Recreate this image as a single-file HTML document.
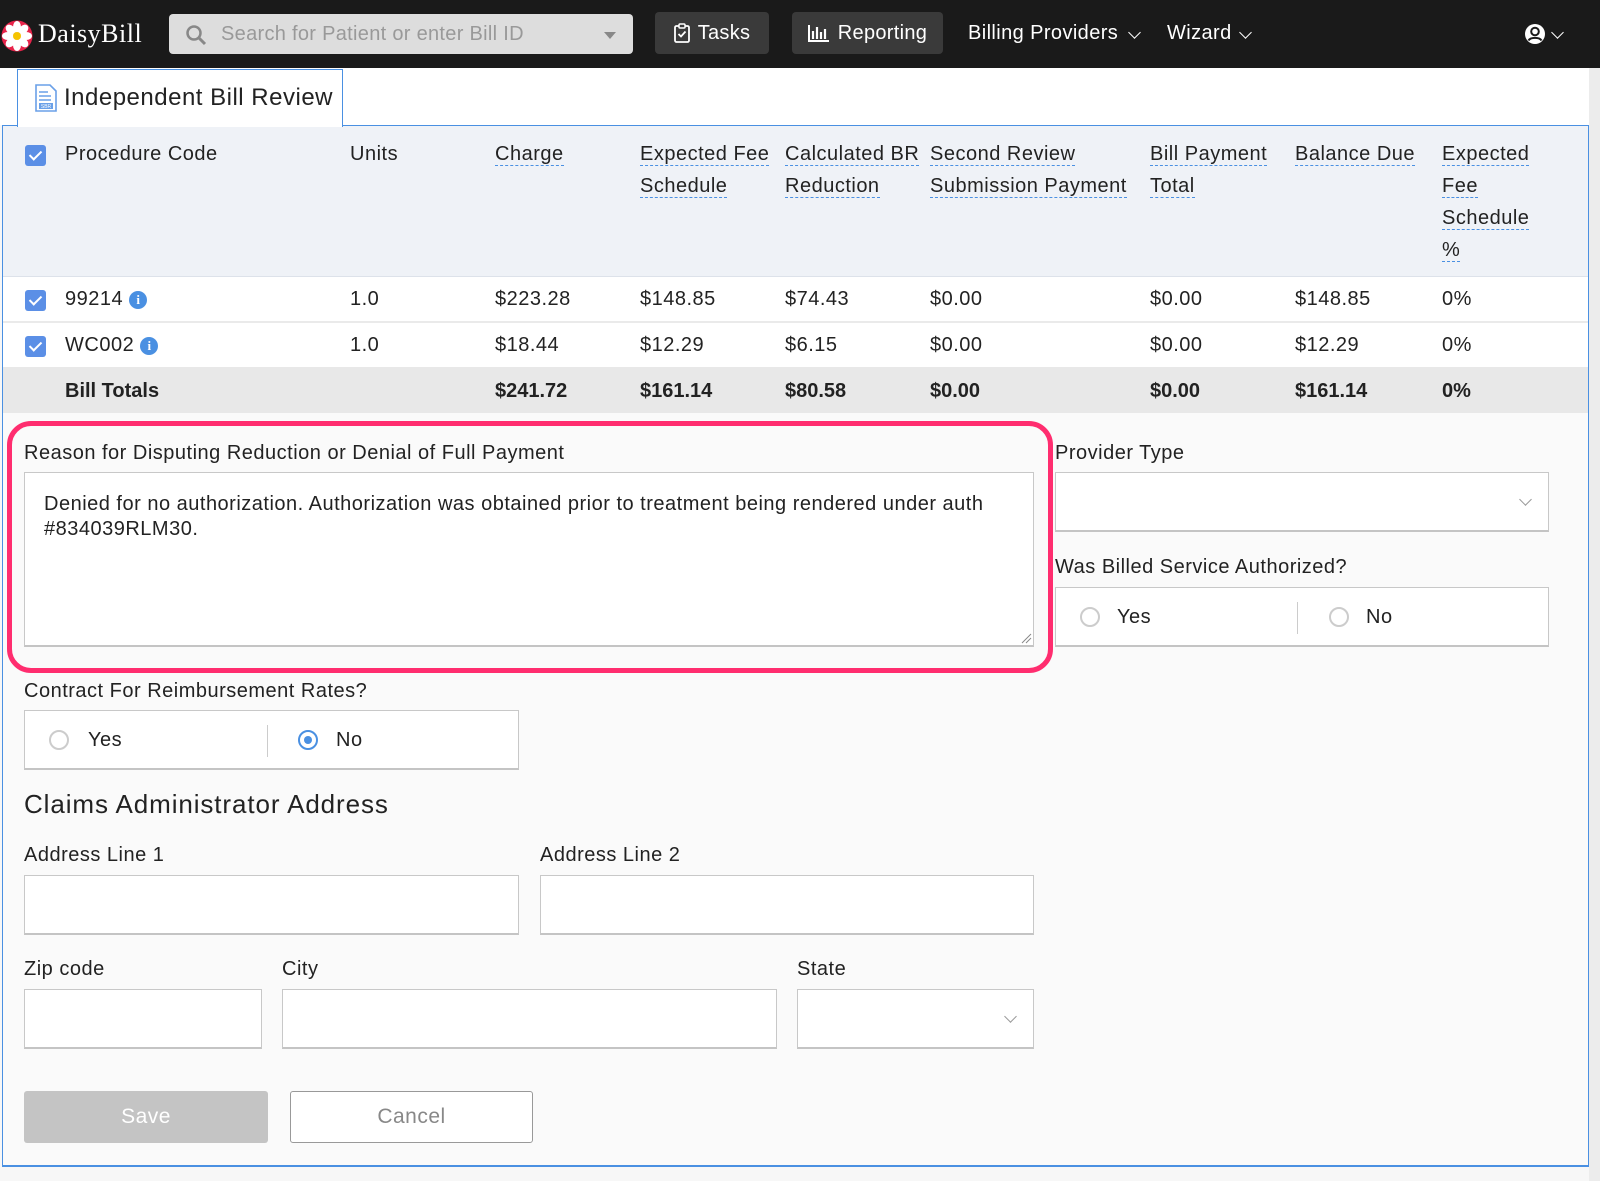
<!DOCTYPE html>
<html><head><meta charset="utf-8">
<style>
*{box-sizing:border-box;margin:0;padding:0}
body{width:1600px;height:1181px;position:relative;background:#f7f7f7;font-family:"Liberation Sans",Arial,sans-serif;color:#222;overflow:hidden}
.a{position:absolute}
.nav{left:0;top:0;width:1600px;height:68px;background:#1a1a1a}
.btn{background:#3a3a3a;border-radius:4px;color:#fff;font-size:20px;display:flex;align-items:center;justify-content:center;gap:8px;letter-spacing:.3px}
.navt{color:#fff;font-size:20px;letter-spacing:.4px}
.panel{left:2px;top:125px;width:1587px;height:1041px;border:1px solid #4a90e2;background:#fafafa}
.th{font-size:20px;color:#222;line-height:32px;letter-spacing:.5px}
.u{border-bottom:1.5px dashed #4a90e2}
.cb{width:21px;height:21px;background:#5b8fe6;border-radius:3px}
.cb:after{content:"";position:absolute;left:7px;top:3px;width:5px;height:10px;border:solid #fff;border-width:0 2.5px 2.5px 0;transform:rotate(45deg)}
.td{font-size:20px;letter-spacing:.5px}
.lbl{font-size:20px;color:#222;letter-spacing:.5px}
.box{background:#fff;border:1px solid #c8c8c8;border-bottom:2px solid #c4c4c4}
.rad{width:20px;height:20px;border:2px solid #ccc;border-radius:50%;background:#fff}
.info{display:inline-block;width:18px;height:18px;border-radius:50%;background:#4a90e2;color:#fff;font-size:13px;font-weight:bold;text-align:center;line-height:18px;font-family:"Liberation Serif",serif;vertical-align:1px;letter-spacing:0}
.chev{width:9px;height:9px;border:solid #999;border-width:0 1.5px 1.5px 0;transform:rotate(45deg)}
</style></head><body>
<div class="a nav"></div>
<svg class="a" style="left:1px;top:20px" width="32" height="32" viewBox="0 0 32 32">
<circle cx="16" cy="16" r="15.5" fill="#e8234a"/>
<g fill="#fff"><ellipse cx="16" cy="7" rx="4" ry="6"/><ellipse cx="16" cy="25" rx="4" ry="6"/><ellipse cx="7" cy="16" rx="6" ry="4"/><ellipse cx="25" cy="16" rx="6" ry="4"/>
<ellipse cx="9.5" cy="9.5" rx="4" ry="5.5" transform="rotate(-45 9.5 9.5)"/><ellipse cx="22.5" cy="22.5" rx="4" ry="5.5" transform="rotate(-45 22.5 22.5)"/><ellipse cx="22.5" cy="9.5" rx="4" ry="5.5" transform="rotate(45 22.5 9.5)"/><ellipse cx="9.5" cy="22.5" rx="4" ry="5.5" transform="rotate(45 9.5 22.5)"/></g>
<circle cx="16" cy="16" r="4" fill="#f5c400"/></svg>
<div class="a" style="left:38px;top:19px;color:#fff;font-family:'Liberation Serif',serif;font-size:26px;letter-spacing:.5px">DaisyBill</div>
<div class="a" style="left:169px;top:14px;width:464px;height:40px;background:#ddd;border-radius:4px"></div>
<svg class="a" style="left:185px;top:24px" width="22" height="22" viewBox="0 0 22 22"><circle cx="9" cy="9" r="6.5" fill="none" stroke="#888" stroke-width="2.5"/><path d="M14 14l6 6" stroke="#888" stroke-width="3"/></svg>
<div class="a" style="left:221px;top:23px;color:#999;font-size:20px;letter-spacing:.3px">Search for Patient or enter Bill ID</div>
<div class="a" style="left:604px;top:32px;border:6px solid transparent;border-top:7px solid #888;border-bottom:0;width:0"></div>
<div class="a btn" style="left:655px;top:12px;width:114px;height:42px">
<svg width="16" height="20" viewBox="0 0 16 20"><rect x="1" y="3" width="14" height="16" rx="1.5" fill="none" stroke="#fff" stroke-width="1.8"/><rect x="5" y="1" width="6" height="4" rx="1" fill="#3a3a3a" stroke="#fff" stroke-width="1.5"/><path d="M4.5 11l2.5 2.5 4.5-5" fill="none" stroke="#fff" stroke-width="1.8"/></svg>Tasks</div>
<div class="a btn" style="left:792px;top:12px;width:151px;height:42px">
<svg width="22" height="18" viewBox="0 0 22 18"><path d="M1 1v16h20" fill="none" stroke="#fff" stroke-width="2"/><path d="M5 7v8M9 3v12M13 8v7M17 5v10" stroke="#fff" stroke-width="2.2"/></svg>Reporting</div>
<div class="a navt" style="left:968px;top:22px">Billing Providers</div>
<div class="a chev" style="left:1130px;top:28px;border-color:#fff"></div>
<div class="a navt" style="left:1167px;top:22px">Wizard</div>
<div class="a chev" style="left:1241px;top:28px;border-color:#fff"></div>
<svg class="a" style="left:1524px;top:23px" width="22" height="22" viewBox="0 0 22 22"><circle cx="11" cy="11" r="10" fill="#fff"/><circle cx="11" cy="8.5" r="3.8" fill="none" stroke="#1a1a1a" stroke-width="2"/><path d="M4.5 17.5c2-3.5 11-3.5 13 0" fill="none" stroke="#1a1a1a" stroke-width="2"/></svg>
<div class="a chev" style="left:1553px;top:28px;border-color:#fff"></div>
<div class="a" style="left:0;top:68px;width:1589px;height:57px;background:#fff"></div>
<div class="a" style="left:1589px;top:68px;width:11px;height:1113px;background:#ececec"></div>
<div class="a" style="left:17px;top:69px;width:326px;height:58px;border:1px solid #4a90e2;border-bottom:none;background:#fff;z-index:2"></div>
<svg class="a" style="left:34px;top:84px;z-index:3" width="24" height="28" viewBox="0 0 24 28"><path d="M2 1h14l6 6v20H2z" fill="#fff" stroke="#6aa0e8" stroke-width="1.6"/><path d="M5 8h9M5 12h12M5 16h12" stroke="#6aa0e8" stroke-width="1.6"/><rect x="5" y="19" width="14" height="6" fill="#6aa0e8"/><text x="12" y="24" font-size="5" fill="#fff" text-anchor="middle" font-family="Liberation Sans">SBR</text></svg>
<div class="a" style="left:64px;top:84px;font-size:24px;letter-spacing:.5px;color:#222;z-index:3">Independent Bill Review</div>
<div class="a panel"></div>
<div class="a" style="left:3px;top:126px;width:1585px;height:151px;background:#eff2f7;border-bottom:1px solid #dde2ea"></div>
<div class="a cb" style="left:25px;top:145px"></div>
<div class="a th" style="left:65px;top:138px">Procedure Code</div>
<div class="a th" style="left:350px;top:138px">Units</div>
<div class="a th" style="left:495px;top:138px"><span class="u">Charge</span></div>
<div class="a th" style="left:640px;top:138px"><span class="u">Expected Fee</span><br><span class="u">Schedule</span></div>
<div class="a th" style="left:785px;top:138px"><span class="u">Calculated BR</span><br><span class="u">Reduction</span></div>
<div class="a th" style="left:930px;top:138px"><span class="u">Second Review</span><br><span class="u">Submission Payment</span></div>
<div class="a th" style="left:1150px;top:138px"><span class="u">Bill Payment</span><br><span class="u">Total</span></div>
<div class="a th" style="left:1295px;top:138px"><span class="u">Balance Due</span></div>
<div class="a th" style="left:1442px;top:138px"><span class="u">Expected</span><br><span class="u">Fee</span><br><span class="u">Schedule</span><br><span class="u">%</span></div>
<div class="a" style="left:3px;top:277px;width:1585px;height:46px;background:#fff;border-bottom:2px solid #eaeaea"></div>
<div class="a" style="left:3px;top:323px;width:1585px;height:44px;background:#fff"></div>
<div class="a" style="left:3px;top:367px;width:1585px;height:46px;background:#e8e8e8"></div>
<div class="a cb" style="left:25px;top:290px"></div>
<div class="a cb" style="left:25px;top:336px"></div>
<div class="a td" style="left:65px;top:288px">99214 <span class="info">i</span></div>
<div class="a td" style="left:65px;top:334px">WC002 <span class="info">i</span></div>
<div class="a td" style="left:350px;top:288px">1.0</div><div class="a td" style="left:350px;top:334px">1.0</div>
<div class="a td" style="left:495px;top:288px">$223.28</div><div class="a td" style="left:495px;top:334px">$18.44</div>
<div class="a td" style="left:640px;top:288px">$148.85</div><div class="a td" style="left:640px;top:334px">$12.29</div>
<div class="a td" style="left:785px;top:288px">$74.43</div><div class="a td" style="left:785px;top:334px">$6.15</div>
<div class="a td" style="left:930px;top:288px">$0.00</div><div class="a td" style="left:930px;top:334px">$0.00</div>
<div class="a td" style="left:1150px;top:288px">$0.00</div><div class="a td" style="left:1150px;top:334px">$0.00</div>
<div class="a td" style="left:1295px;top:288px">$148.85</div><div class="a td" style="left:1295px;top:334px">$12.29</div>
<div class="a td" style="left:1442px;top:288px">0%</div><div class="a td" style="left:1442px;top:334px">0%</div>
<div class="a td" style="left:65px;top:380px;font-weight:bold;letter-spacing:0">Bill Totals</div>
<div class="a td" style="left:495px;top:380px;font-weight:bold;letter-spacing:0">$241.72</div>
<div class="a td" style="left:640px;top:380px;font-weight:bold;letter-spacing:0">$161.14</div>
<div class="a td" style="left:785px;top:380px;font-weight:bold;letter-spacing:0">$80.58</div>
<div class="a td" style="left:930px;top:380px;font-weight:bold;letter-spacing:0">$0.00</div>
<div class="a td" style="left:1150px;top:380px;font-weight:bold;letter-spacing:0">$0.00</div>
<div class="a td" style="left:1295px;top:380px;font-weight:bold;letter-spacing:0">$161.14</div>
<div class="a td" style="left:1442px;top:380px;font-weight:bold;letter-spacing:0">0%</div>
<div class="a lbl" style="left:24px;top:442px">Reason for Disputing Reduction or Denial of Full Payment</div>
<div class="a box" style="left:24px;top:472px;width:1010px;height:175px"></div>
<div class="a" style="left:44px;top:492px;font-size:20px;letter-spacing:.5px;line-height:25px;width:980px">Denied for no authorization. Authorization was obtained prior to treatment being rendered under auth #834039RLM30.</div>
<svg class="a" style="left:1020px;top:632px" width="12" height="12"><path d="M2 11L11 2M6 11L11 6" stroke="#888" stroke-width="1"/></svg>
<div class="a" style="left:7px;top:421px;width:1046px;height:252px;border:5px solid #ff2d6f;border-radius:24px"></div>
<div class="a lbl" style="left:1055px;top:442px">Provider Type</div>
<div class="a box" style="left:1055px;top:472px;width:494px;height:60px"></div>
<div class="a chev" style="left:1521px;top:495px"></div>
<div class="a lbl" style="left:1055px;top:556px">Was Billed Service Authorized?</div>
<div class="a box" style="left:1055px;top:587px;width:494px;height:60px"></div>
<div class="a rad" style="left:1080px;top:607px"></div>
<div class="a td" style="left:1117px;top:606px">Yes</div>
<div class="a" style="left:1297px;top:602px;width:1px;height:32px;background:#ccc"></div>
<div class="a rad" style="left:1329px;top:607px"></div>
<div class="a td" style="left:1366px;top:606px">No</div>
<div class="a lbl" style="left:24px;top:680px">Contract For Reimbursement Rates?</div>
<div class="a box" style="left:24px;top:710px;width:495px;height:60px"></div>
<div class="a rad" style="left:49px;top:730px"></div>
<div class="a td" style="left:88px;top:729px">Yes</div>
<div class="a" style="left:267px;top:725px;width:1px;height:32px;background:#ccc"></div>
<div class="a rad" style="left:298px;top:730px;border-color:#4a90e2"></div>
<div class="a" style="left:304px;top:736px;width:8px;height:8px;border-radius:50%;background:#4a90e2"></div>
<div class="a td" style="left:336px;top:729px">No</div>
<div class="a" style="left:24px;top:789px;font-size:26px;letter-spacing:.9px">Claims Administrator Address</div>
<div class="a lbl" style="left:24px;top:844px">Address Line 1</div>
<div class="a lbl" style="left:540px;top:844px">Address Line 2</div>
<div class="a box" style="left:24px;top:875px;width:495px;height:60px"></div>
<div class="a box" style="left:540px;top:875px;width:494px;height:60px"></div>
<div class="a lbl" style="left:24px;top:958px">Zip code</div>
<div class="a lbl" style="left:282px;top:958px">City</div>
<div class="a lbl" style="left:797px;top:958px">State</div>
<div class="a box" style="left:24px;top:989px;width:238px;height:60px"></div>
<div class="a box" style="left:282px;top:989px;width:495px;height:60px"></div>
<div class="a box" style="left:797px;top:989px;width:237px;height:60px"></div>
<div class="a chev" style="left:1006px;top:1012px"></div>
<div class="a" style="left:24px;top:1091px;width:244px;height:52px;background:#c4c4c4;border-radius:3px;color:#fff;font-size:21px;letter-spacing:.5px;text-align:center;line-height:52px">Save</div>
<div class="a" style="left:290px;top:1091px;width:243px;height:52px;background:#fff;border:1.5px solid #999;border-radius:3px;color:#888;font-size:21px;letter-spacing:.5px;text-align:center;line-height:49px">Cancel</div>
<div class="a" style="left:2px;top:1165px;width:1587px;height:2px;background:#4a90e2"></div>
</body></html>
